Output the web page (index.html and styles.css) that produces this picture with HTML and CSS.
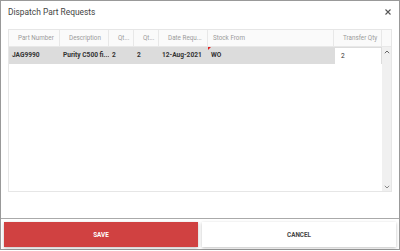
FILE: index.html
```html
<!doctype html>
<html>
<head>
<meta charset="UTF-8">
<title>Dispatch Part Requests</title>
<link rel="stylesheet" href="styles.css">
</head>
<body>
	<div class="dialog">
		<div class="head">
			<span class="title">Dispatch Part Requests</span>
			<svg class="close" width="6" height="6" viewBox="0 0 6 6"><path d="M0.5 0.5L5.5 5.5M5.5 0.5L0.5 5.5" stroke="#555" stroke-width="1.1"/></svg>
		</div>
		<div class="grid">
			<div class="row header">
				<div class="cell">Part Number</div>
				<div class="cell">Description</div>
				<div class="cell">Qt...</div>
				<div class="cell">Qt...</div>
				<div class="cell">Date Requ...</div>
				<div class="cell narrow">Stock From</div>
				<div class="cell">Transfer Qty</div>
				<div class="cell blank"></div>
			</div>
			<div class="body">
				<div class="rows">
					<div class="row data">
						<div class="cell">JAG9990</div>
						<div class="cell">Purity C500 fi...</div>
						<div class="cell">2</div>
						<div class="cell">2</div>
						<div class="cell">12-Aug-2021</div>
						<div class="cell dirty">WO</div>
						<div class="cell edit"><div class="input">2</div></div>
					</div>
				</div>
				<div class="scroll">
					<svg width="6" height="4" viewBox="0 0 6 4"><path d="M0.8 3.2L3 1L5.2 3.2" fill="none" stroke="#666" stroke-width="1"/></svg>
					<svg width="6" height="4" viewBox="0 0 6 4"><path d="M0.8 0.8L3 3L5.2 0.8" fill="none" stroke="#888" stroke-width="1"/></svg>
				</div>
			</div>
		</div>
		<div class="spacer"></div>
		<div class="foot">
			<button class="btn save">SAVE</button>
			<button class="btn cancel">CANCEL</button>
		</div>
	</div>
</body>
</html>
```

FILE: styles.css
```css
* { box-sizing: border-box }
body {
	margin: 0;
	font-family: Roboto, "Liberation Sans", sans-serif;
	background: #fff;
}
.dialog {
	display: flex;
	flex-direction: column;
	width: 400px;
	height: 250px;
	border: 1px solid #999;
	background: #fff;
}
.head {
	display: flex;
	align-items: center;
	justify-content: space-between;
	height: 22px;
	padding: 0 8px 0 7px;
}
.title {
	font-size: 8.4px;
	color: #444;
}
.grid {
	margin: 6px 7px 0;
	height: 163px;
	border: 1px solid #e6e6e6;
	display: flex;
	flex-direction: column;
}
.row {
	display: grid;
	grid-template-columns: 51px 49px 25px 25px 49px 126px 48px 1fr;
}
.header {
	height: 17px;
	background: #fafafa;
	border-bottom: 1px solid #e8e8e8;
}
.header .cell {
	padding-left: 9px;
	border-right: 1px solid #e8e8e8;
	font-size: 6.3px;
	color: #9a9a9a;
	line-height: 16px;
	white-space: nowrap;
	overflow: hidden;
}
.header .narrow { padding-left: 5px }
.header .blank { border-right: none }
.body {
	flex: 1;
	display: grid;
	grid-template-columns: 373px 1fr;
}
.data {
	grid-template-columns: 51px 49px 25px 25px 49px 126px 48px;
	height: 17px;
	background: #dcdcdc;
}
.data .cell {
	position: relative;
	padding-left: 3px;
	font-size: 6.6px;
	font-weight: bold;
	color: #333;
	line-height: 17px;
	white-space: nowrap;
	overflow: hidden;
}
.dirty::before {
	content: "";
	position: absolute;
	left: 0;
	top: 0;
	border-top: 3px solid #e02020;
	border-right: 3px solid transparent;
}
.data .edit { padding: 1px 1px 0 1px }
.input {
	height: 16px;
	background: #fff;
	padding-left: 6px;
	font-weight: normal;
	line-height: 16px;
}
.scroll {
	display: flex;
	flex-direction: column;
	justify-content: space-between;
	align-items: center;
	padding: 3px 0 2px;
	background: #f0f0f0;
}
.spacer { flex: 1 }
.foot {
	display: flex;
	gap: 4px;
	padding: 3px 3px 2px;
	border-top: 1px solid #aaa;
}
.btn {
	flex: 1;
	height: 25px;
	border: none;
	font-family: inherit;
	font-size: 6.3px;
	font-weight: bold;
	box-shadow: 0 1px 3px rgba(0, 0, 0, 0.25);
}
.save {
	background: #d04141;
	color: #fff;
}
.cancel {
	background: #fff;
	color: #444;
}
```
